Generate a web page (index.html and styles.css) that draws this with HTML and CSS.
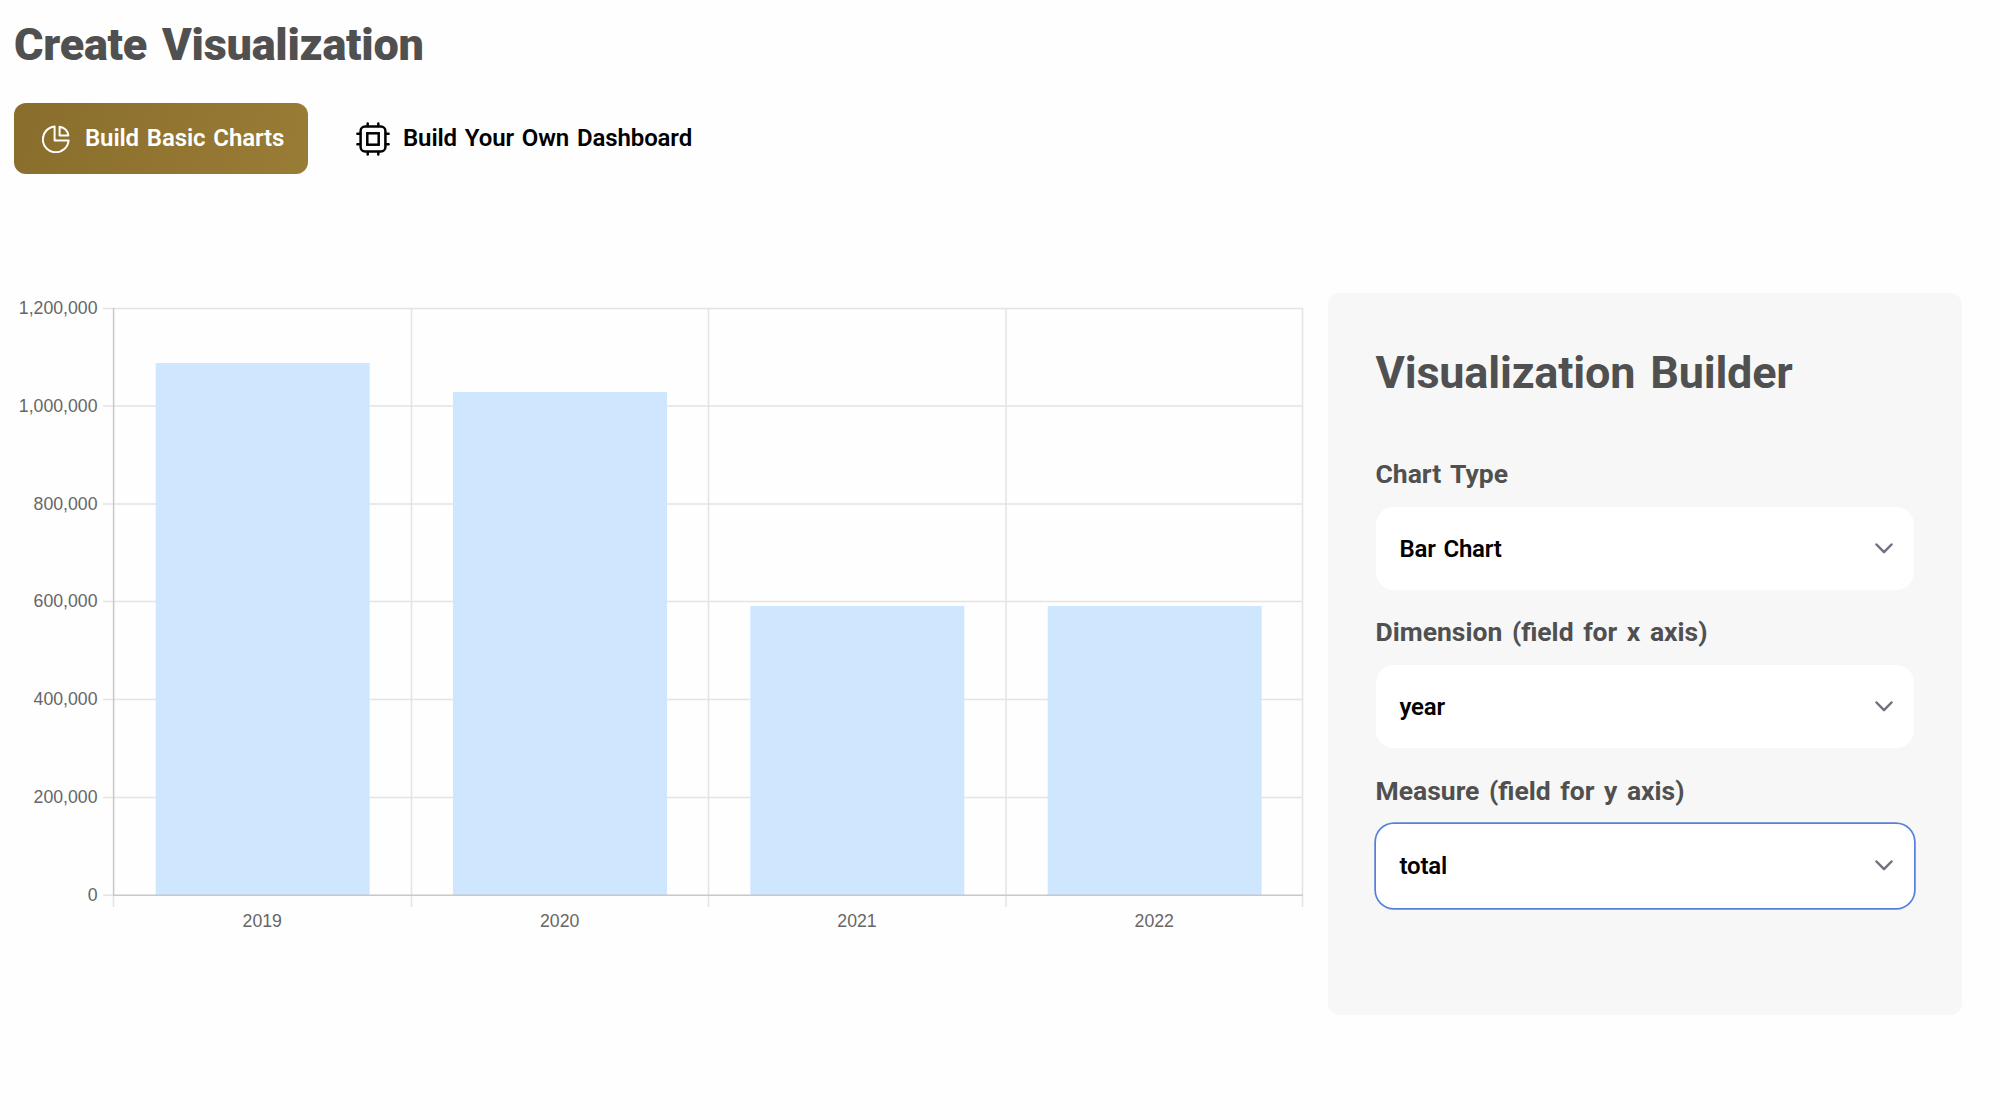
FILE: index.html
```html
<!DOCTYPE html>
<html lang="en">
<head>
<meta charset="utf-8">
<title>Create Visualization</title>
<link rel="stylesheet" href="styles.css">
</head>
<body>
<main class="page">
  <h1 class="page-title"><span>Create Visualization</span></h1>
  <nav class="tabs">
    <button class="tab tab-active">
      <svg class="pie-icon" viewBox="0 0 28 28" fill="none" stroke="currentColor" stroke-width="2" stroke-linejoin="round"><path d="M12.6 1.5A12.9 12.9 0 1 0 26.6 15.5H12.6Z"/><path d="M17.6 1.7V10.4H26.3A9.6 9.6 0 0 0 17.6 1.7Z"/></svg>
      <span class="tab-text">Build Basic Charts</span>
    </button>
    <button class="tab">
      <svg class="chip-icon" viewBox="0 0 34 34" fill="none" stroke="currentColor" stroke-width="2.5" stroke-linecap="round"><rect x="4.6" y="4.6" width="24.8" height="24.8" rx="4.5"/><rect x="11.3" y="11.3" width="11.4" height="11.4"/><path d="M11.7 4V1.4M22.3 4V1.4M11.7 32.6V30M22.3 32.6V30M4 11.7H1.4M4 22.3H1.4M32.6 11.7H30M32.6 22.3H30"/></svg>
      <span class="tab-text">Build Your Own Dashboard</span>
    </button>
  </nav>
  <div class="workspace">
    <svg class="chart" viewBox="0 0 1328 722" role="img" aria-label="Total by year">
      <g class="grid">
        <path d="M103 15.5H1303M103 113H1303M103 211H1303M103 308.5H1303M103 406.5H1303M103 504.5H1303"/>
        <path d="M411.5 15V614M708.5 15V614M1006 15V614M1302.5 15V614M113.5 602V614M103 602.3H113"/>
      </g>
      <g class="bars">
        <rect x="155.7" y="70" width="214" height="532"/>
        <rect x="453" y="99" width="214" height="503"/>
        <rect x="750.3" y="313" width="214" height="289"/>
        <rect x="1047.7" y="313" width="214" height="289"/>
      </g>
      <path class="axis" d="M113.6 15V602.3H1303"/>
      <g class="labels labels-y">
        <text x="97.5" y="20.5">1,200,000</text>
        <text x="97.5" y="118.5">1,000,000</text>
        <text x="97.5" y="216.5">800,000</text>
        <text x="97.5" y="314">600,000</text>
        <text x="97.5" y="411.5">400,000</text>
        <text x="97.5" y="509.5">200,000</text>
        <text x="97.5" y="607.5">0</text>
      </g>
      <g class="labels labels-x">
        <text x="262.3" y="634">2019</text>
        <text x="559.7" y="634">2020</text>
        <text x="857" y="634">2021</text>
        <text x="1154.3" y="634">2022</text>
      </g>
    </svg>
    <aside class="builder">
      <h2 class="builder-title"><span>Visualization Builder</span></h2>
      <div class="field">
        <label class="field-label"><span>Chart Type</span></label>
        <div class="select"><span>Bar Chart</span><svg class="chevron" viewBox="0 0 18 11"><path d="M1.5 1.5 9 9.2 16.5 1.5"/></svg></div>
      </div>
      <div class="field">
        <label class="field-label"><span>Dimension (field for x axis)</span></label>
        <div class="select"><span>year</span><svg class="chevron" viewBox="0 0 18 11"><path d="M1.5 1.5 9 9.2 16.5 1.5"/></svg></div>
      </div>
      <div class="field">
        <label class="field-label"><span>Measure (field for y axis)</span></label>
        <div class="select select-focus"><span>total</span><svg class="chevron" viewBox="0 0 18 11"><path d="M1.5 1.5 9 9.2 16.5 1.5"/></svg></div>
      </div>
    </aside>
  </div>
</main>
</body>
</html>
```
FILE: styles.css
```css
* { box-sizing: border-box; }
body {
  margin: 0;
  background: #fefefe;
  font-family: Roboto, "Liberation Sans", sans-serif;
  color: #000;
}
.page { padding: 18px 38px 0 14px; }
.page-title {
  margin: 0;
  height: 52px;
  font-size: 45px;
  line-height: 53px;
  font-weight: 900;
  letter-spacing: -0.25px;
  word-spacing: 4px;
  color: #505050;
}
.tabs { display: flex; gap: 24px; margin-top: 33px; }
.tab {
  display: flex;
  align-items: center;
  height: 71px;
  padding: 0 24px;
  gap: 13px;
  border: 0;
  border-radius: 12px;
  background: none;
  color: #000;
  font-family: inherit;
  font-size: 24px;
  font-weight: 600;
  line-height: 30px;
  letter-spacing: -0.12px;
  word-spacing: 2px;
  white-space: nowrap;
}
.tab-text { padding-bottom: 1px; }
.tab-active {
  width: 294px;
  padding-left: 28px;
  gap: 15px;
  background: linear-gradient(110deg, #896d2c, #997c35);
  color: #fff;
}
.pie-icon { width: 28px; height: 28px; flex: none; }
.chip-icon { width: 34px; height: 34px; flex: none; }
.workspace { display: flex; margin-top: 119px; }
.chart { width: 1328px; height: 722px; margin-left: -14px; flex: none; }
.grid path { fill: none; stroke: #e4e4e4; stroke-width: 1.5; }
.axis { fill: none; stroke: #c8c8c8; stroke-width: 1.5; }
.bars rect { fill: #cfe7fe; }
.labels { font: 17.7px "Liberation Sans", Arial, sans-serif; fill: #666; }
.labels-y { text-anchor: end; }
.labels-x { text-anchor: middle; }
.builder {
  width: 633.5px;
  height: 722px;
  padding: 53px 47.5px 0;
  border-radius: 12px;
  background: #f7f7f7;
  flex: none;
}
.builder-title {
  margin: 0 0 46px;
  font-size: 45px;
  line-height: 53px;
  font-weight: 700;
  letter-spacing: -0.2px;
  word-spacing: 4px;
  color: #505050;
}
.field { height: 158.25px; }
.field-label {
  display: block;
  height: 62px;
  padding-top: 13px;
  font-size: 26.5px;
  line-height: 32px;
  font-weight: 700;
  word-spacing: 3px;
  color: #505050;
}
.select {
  display: flex;
  align-items: center;
  justify-content: space-between;
  height: 83px;
  padding: 0 21px 0 24px;
  border-radius: 18px;
  background: #fff;
  font-size: 24px;
  font-weight: 600;
  letter-spacing: -0.2px;
  word-spacing: 2px;
}
.select-focus { height: 84px; box-shadow: 0 0 0 1.75px #5681db; }
.chevron { width: 18px; height: 11px; fill: none; stroke: #70727f; stroke-width: 2.5; stroke-linecap: round; stroke-linejoin: round; }
```
